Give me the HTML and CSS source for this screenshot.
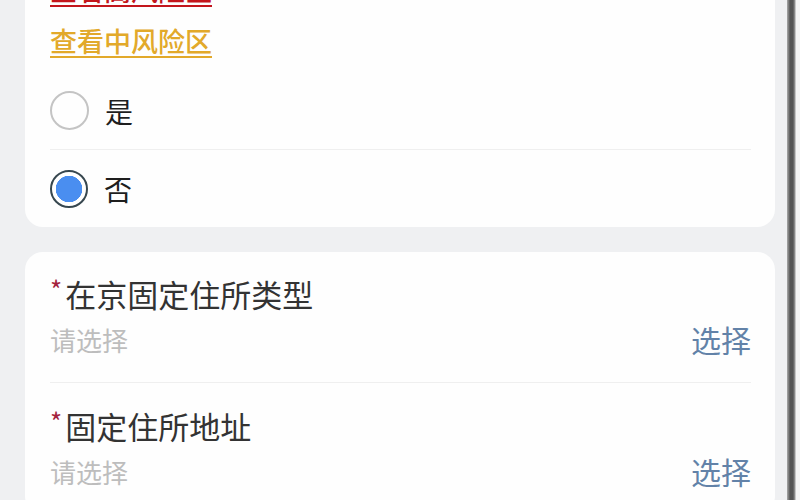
FILE: index.html
```html
<!DOCTYPE html>
<html lang="zh-CN">
<head>
    <meta charset="UTF-8">
    <meta name="viewport" content="width=device-width, initial-scale=1.0">
    <title>在京住所信息</title>
    <link rel="stylesheet" href="styles.css">
</head>
<body>
    <div class="screen">
        <div class="card card-risk">
            <a class="risk-link high" href="#">查看高风险区</a>
            <a class="risk-link mid" href="#">查看中风险区</a>
            <label class="radio-row">
                <span class="radio"></span>
                <span class="radio-text">是</span>
            </label>
            <label class="radio-row">
                <span class="radio checked"></span>
                <span class="radio-text">否</span>
            </label>
        </div>

        <div class="card">
            <div class="field">
                <div class="field-label"><span class="req">*</span>在京固定住所类型</div>
                <div class="field-value">
                    <span class="placeholder">请选择</span>
                    <span class="pick">选择</span>
                </div>
            </div>
            <div class="field">
                <div class="field-label"><span class="req">*</span>固定住所地址</div>
                <div class="field-value">
                    <span class="placeholder">请选择</span>
                    <span class="pick">选择</span>
                </div>
            </div>
        </div>
    </div>
</body>
</html>
```

FILE: styles.css
```css
html {
    height: 100%;
    background: linear-gradient(90deg,
        #eff0f2 0 787px,
        #aaaaaa 787px,
        #555555 790px,
        #555555 793px,
        #999999 795px,
        #f4f4f4 796px);
}
body {
    margin: 0;
    height: 100%;
    overflow: hidden;
    font-family: "Noto Sans CJK SC", "Noto Sans", sans-serif;
    color: #222;
}
.screen {
    width: 750px;
    padding: 0 12px 0 25px;
    display: flex;
    flex-direction: column;
    gap: 25px;
}
.card {
    background: #fefefe;
    border-radius: 18px;
    padding: 0 24px 0 25px;
}
.card-risk {
    margin-top: -48px;
    padding-top: 20px;
    display: flex;
    flex-direction: column;
    align-items: flex-start;
}
.risk-link {
    font-size: 27px;
    font-weight: 500;
    line-height: 36px;
    margin-bottom: 15px;
    text-decoration: underline;
    text-decoration-thickness: 2px;
    text-underline-offset: 4px;
}
.risk-link.high {
    color: #c3161c;
}
.risk-link.mid {
    color: #e2a92a;
    margin-bottom: 13px;
}
.radio-row {
    align-self: stretch;
    height: 77px;
    display: flex;
    align-items: center;
    gap: 16px;
}
.radio-row + .radio-row {
    border-top: 1px solid #efefef;
}
.radio {
    width: 35px;
    height: 35px;
    border: 2px solid #c4c4c4;
    border-radius: 50%;
    box-sizing: content-box;
}
.radio.checked {
    width: 34px;
    height: 34px;
    border: 2px solid #37474f;
    background: radial-gradient(circle, #4a8ef0 0 13px, #fff 13.5px);
}
.radio-text {
    font-size: 28px;
    color: #1e1e1e;
}
.field {
    padding: 22px 0 20px;
}
.field + .field {
    border-top: 1px solid #efefef;
    padding-top: 23px;
}
.field-label {
    font-size: 31px;
    line-height: 40px;
    color: #333;
    display: flex;
    align-items: flex-start;
}
.req {
    color: #a3223c;
    font-size: 26px;
    line-height: 30px;
    margin-right: 3px;
}
.field-value {
    margin-top: 2px;
    height: 46px;
    display: flex;
    justify-content: space-between;
    align-items: center;
}
.placeholder {
    font-size: 26px;
    color: #bdbdbd;
}
.pick {
    font-size: 30px;
    color: #6282a8;
}
```
